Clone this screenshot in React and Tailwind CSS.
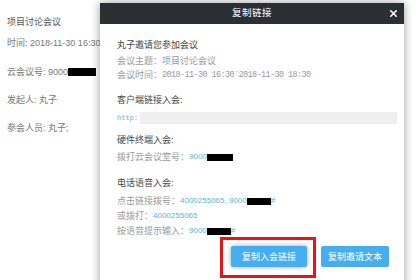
import { X } from 'lucide-react'

const cjk = { fontFamily: '"Liberation Sans", "Noto Sans CJK SC", sans-serif' }

function Redacted({ w = 26 }) {
    return <span className={`inline-block h-[7px] bg-black align-middle`} style={{ width: w }} />
}

export default function App() {
    return (
        <div className="relative w-[420px] h-[280px] bg-white overflow-hidden" style={cjk}>
            {/* page behind the dialog */}
            <div className="flex flex-col pl-[7px] pt-[15px] text-[9px] leading-[14px] text-[#777]">
                <div className="text-[#555]">项目讨论会议</div>
                <div className="mt-[7px]">时间: 2018-11-30 16:30</div>
                <div className="mt-[15px] flex items-center">
                    云会议号: 9000<span className="inline-block w-[28px] h-[8px] bg-black" />
                </div>
                <div className="mt-[14px]">发起人: 丸子</div>
                <div className="mt-[14px]">参会人员: 丸子;</div>
            </div>

            {/* dialog */}
            <div className="absolute left-[100px] top-[3px] w-[304px] h-[290px] bg-white shadow-[0_0_9px_rgba(0,0,0,0.4)]">
                <div className="h-[21px] bg-[#2b2e33] relative flex items-center justify-center">
                    <span className="text-white text-[9.5px] tracking-[0.5px]">复制链接</span>
                    <X className="absolute right-[5px] top-[5px] w-[11px] h-[11px] text-white" strokeWidth={3.5} />
                </div>

                <div className="flex flex-col pl-[17px] pr-[7px] pt-[14px] text-[9px] leading-[14px] text-[#9a9a9a]">
                    <div className="text-[#444]">丸子邀请您参加会议</div>
                    <div className="mt-[2px]">会议主题：项目讨论会议</div>
                    <div className="flex items-center">
                        会议时间：
                        <span className="font-['Liberation_Mono'] text-[8.5px] tracking-[-0.6px]">2018-11-30 16:30`2018-11-30 18:30</span>
                    </div>

                    <div className="mt-[11px] text-[#444]">客户端链接入会:</div>
                    <div className="mt-[5px] flex items-center h-[12px]">
                        <span className="font-['Liberation_Mono'] text-[7px] text-[#5db3d9] w-[23px]">http:</span>
                        <span className="flex-1 h-[12px] bg-[#efefef]" />
                    </div>

                    <div className="mt-[9px] text-[#444]">硬件终端入会:</div>
                    <div className="mt-[3px] flex items-center">
                        拨打云会议室号：<span className="text-[8px] text-[#5db3d9]">9000</span>
                        <Redacted w={26} />
                    </div>

                    <div className="mt-[12px] text-[#444]">电话语音入会:</div>
                    <div className="mt-[4px] flex items-center">
                        点击链接拨号：<span className="text-[8px] text-[#5db3d9]">4000255065, 9000</span>
                        <Redacted w={24} />
                        <span className="text-[8px] text-[#5db3d9]">#</span>
                    </div>
                    <div className="mt-[1px] flex items-center">
                        或拨打：<span className="text-[8px] text-[#5db3d9]">4000255065</span>
                    </div>
                    <div className="mt-[1px] flex items-center">
                        按语音提示输入：<span className="text-[8px] text-[#5db3d9]">9000</span>
                        <Redacted w={24} />
                        <span className="text-[8px] text-[#5db3d9]">#</span>
                    </div>

                    <div className="mt-[8px] flex justify-end gap-[14px] pr-[8px]">
                        <div className="relative">
                            <button className="w-[76px] h-[21px] bg-[#45aef0] text-white text-[9px] rounded-[2px] shadow-[0_0_5px_rgba(0,0,0,0.35)]">
                                复制入会链接
                            </button>
                            {/* annotation box */}
                            <div className="absolute left-[-11px] top-[-9px] w-[96px] h-[41px] border-[3px] border-[#ee1111]" />
                        </div>
                        <button className="w-[68px] h-[21px] bg-[#45aef0] text-white text-[9px] rounded-[2px]">
                            复制邀请文本
                        </button>
                    </div>
                </div>
            </div>
        </div>
    )
}
